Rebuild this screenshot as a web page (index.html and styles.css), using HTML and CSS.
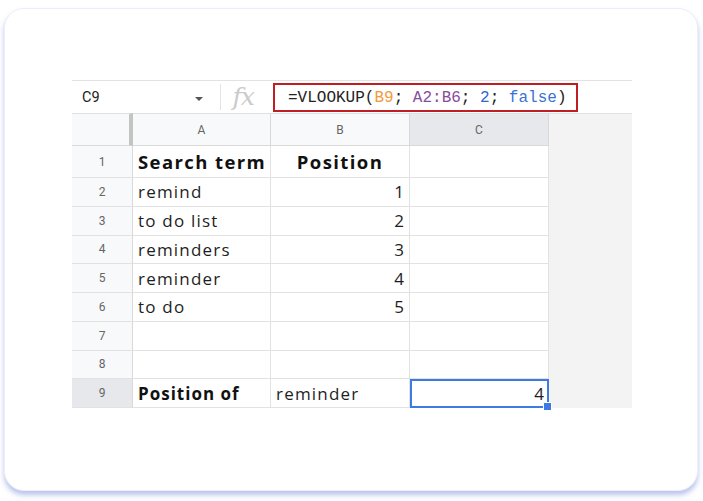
FILE: index.html
```html
<!DOCTYPE html>
<html>
<head>
<meta charset="utf-8">
<link rel="stylesheet" href="styles.css">
</head>
<body>
<div class="card">
  <div class="sheet">
    <div class="fbar">
      <div class="namebox"><span class="ref">C9</span><span class="caret"></span></div>
      <div class="fx">fx</div>
      <div class="formula">=VLOOKUP(<span class="o">B9</span>; <span class="p">A2:B6</span>; <span class="b">2</span>; <span class="b2">false</span>)</div>
    </div>
    <div class="grid">
      <div class="corner"></div>
      <div class="ch">A</div>
      <div class="ch">B</div>
      <div class="ch sel">C</div>
      <div class="void"></div>

      <div class="rh r1">1</div>
      <div class="c r1 bold">Search term</div>
      <div class="c r1 bold center">Position</div>
      <div class="c r1"></div>

      <div class="rh">2</div><div class="c">remind</div><div class="c num">1</div><div class="c"></div>
      <div class="rh">3</div><div class="c">to do list</div><div class="c num">2</div><div class="c"></div>
      <div class="rh">4</div><div class="c">reminders</div><div class="c num">3</div><div class="c"></div>
      <div class="rh">5</div><div class="c">reminder</div><div class="c num">4</div><div class="c"></div>
      <div class="rh">6</div><div class="c">to do</div><div class="c num">5</div><div class="c"></div>
      <div class="rh">7</div><div class="c"></div><div class="c"></div><div class="c"></div>
      <div class="rh">8</div><div class="c"></div><div class="c"></div><div class="c"></div>
      <div class="rh sel">9</div><div class="c bold small">Position of</div><div class="c">reminder</div><div class="c num active">4<span class="handle"></span></div>
    </div>
  </div>
</div>
</body>
</html>
```
FILE: styles.css
```css
html, body {
  margin: 0;
  padding: 0;
  background: #ffffff;
}
body {
  padding: 8px 5px 9px 4px;
  font-family: "Open Sans", "Liberation Sans", sans-serif;
}
.card {
  height: 483px;
  box-sizing: border-box;
  background: #ffffff;
  border-radius: 20px;
  border: 1px solid #eceffb;
  box-shadow: 0 4px 5px rgba(120, 140, 220, 0.5);
  padding: 71px 0 0 67px;
}
.sheet {
  width: 560px;
}
.fbar {
  height: 32px;
  border-top: 1px solid #e2e2e2;
  display: flex;
  align-items: center;
}
.namebox {
  width: 149px;
  height: 26px;
  display: flex;
  align-items: center;
  justify-content: space-between;
  padding: 0 0 0 10px;
  box-sizing: border-box;
  border-right: 1px solid #e4e4e4;
}
.ref {
  font-family: Roboto, "Liberation Sans", sans-serif;
  font-size: 14.5px;
  color: #222;
}
.caret {
  width: 0;
  height: 0;
  border-left: 4.5px solid transparent;
  border-right: 4.5px solid transparent;
  border-top: 4.5px solid #555;
  margin-right: 17px;
  margin-top: 3px;
}
.fx {
  width: 52px;
  font-family: "DejaVu Serif", "Liberation Serif", serif;
  font-style: italic;
  font-size: 24px;
  color: #cbcbcb;
  padding-left: 11px;
  box-sizing: border-box;
  letter-spacing: -1px;
  transform: scaleX(1.05);
  transform-origin: left center;
}
.formula {
  width: 305px;
  height: 29px;
  box-sizing: border-box;
  border: 2px solid #bf1e24;
  font-family: "Liberation Mono", "DejaVu Sans Mono", monospace;
  font-size: 16px;
  color: #222;
  display: flex;
  align-items: center;
  padding-left: 13px;
  white-space: pre;
  margin-top: 1px;
}
.o { color: #f39a3d; }
.p { color: #8a4c9c; }
.b { color: #2f66cf; }
.b2 { color: #3a72d3; }

.grid {
  display: grid;
  grid-template-columns: 61px 138px 139px 139px 83px;
  grid-template-rows: 33px 32px repeat(8, 28.75px);
}
.corner {
  background: #f8f9fa;
  border-top: 1px solid #e0e0e0;
  border-right: 4px solid #c4c4c4;
  border-bottom: 1px solid #d9d9d9;
}
.ch {
  background: #f8f9fa;
  border-top: 1px solid #e0e0e0;
  border-right: 1px solid #d9d9d9;
  border-bottom: 1px solid #d9d9d9;
  display: flex;
  align-items: center;
  justify-content: center;
  font-family: Roboto, "Liberation Sans", sans-serif;
  font-size: 12px;
  color: #666;
}
.ch.sel, .rh.sel {
  background: #e6e8eb;
}
.void {
  grid-column: 5;
  grid-row: 1 / -1;
  background: #f3f3f3;
  border-top: 1px solid #e0e0e0;
}
.rh {
  grid-column: 1;
  background: #f8f9fa;
  border-right: 1px solid #d9d9d9;
  border-bottom: 1px solid #e2e2e2;
  display: flex;
  align-items: center;
  justify-content: center;
  font-family: Roboto, "Liberation Sans", sans-serif;
  font-size: 12px;
  color: #666;
}
.c {
  position: relative;
  background: #fff;
  border-right: 1px solid #e2e2e2;
  border-bottom: 1px solid #e2e2e2;
  display: flex;
  align-items: center;
  padding: 0 5px;
  font-size: 17px;
  letter-spacing: 1.2px;
  color: #1e1e1e;
  white-space: nowrap;
  overflow: visible;
}
.c.num {
  letter-spacing: 0;
}
.bold {
  font-weight: 700;
  font-size: 18.5px;
  letter-spacing: 1.4px;
  color: #111;
}
.bold.small {
  font-size: 17px;
  letter-spacing: 1px;
}
.center {
  justify-content: center;
}
.num {
  justify-content: flex-end;
}
.active {
  border: 2px solid #3b7be2;
  padding-right: 3px;
}
.handle {
  position: absolute;
  right: -5px;
  bottom: -5px;
  width: 7px;
  height: 7px;
  background: #3b7be2;
  border: 1px solid #fff;
}
```
